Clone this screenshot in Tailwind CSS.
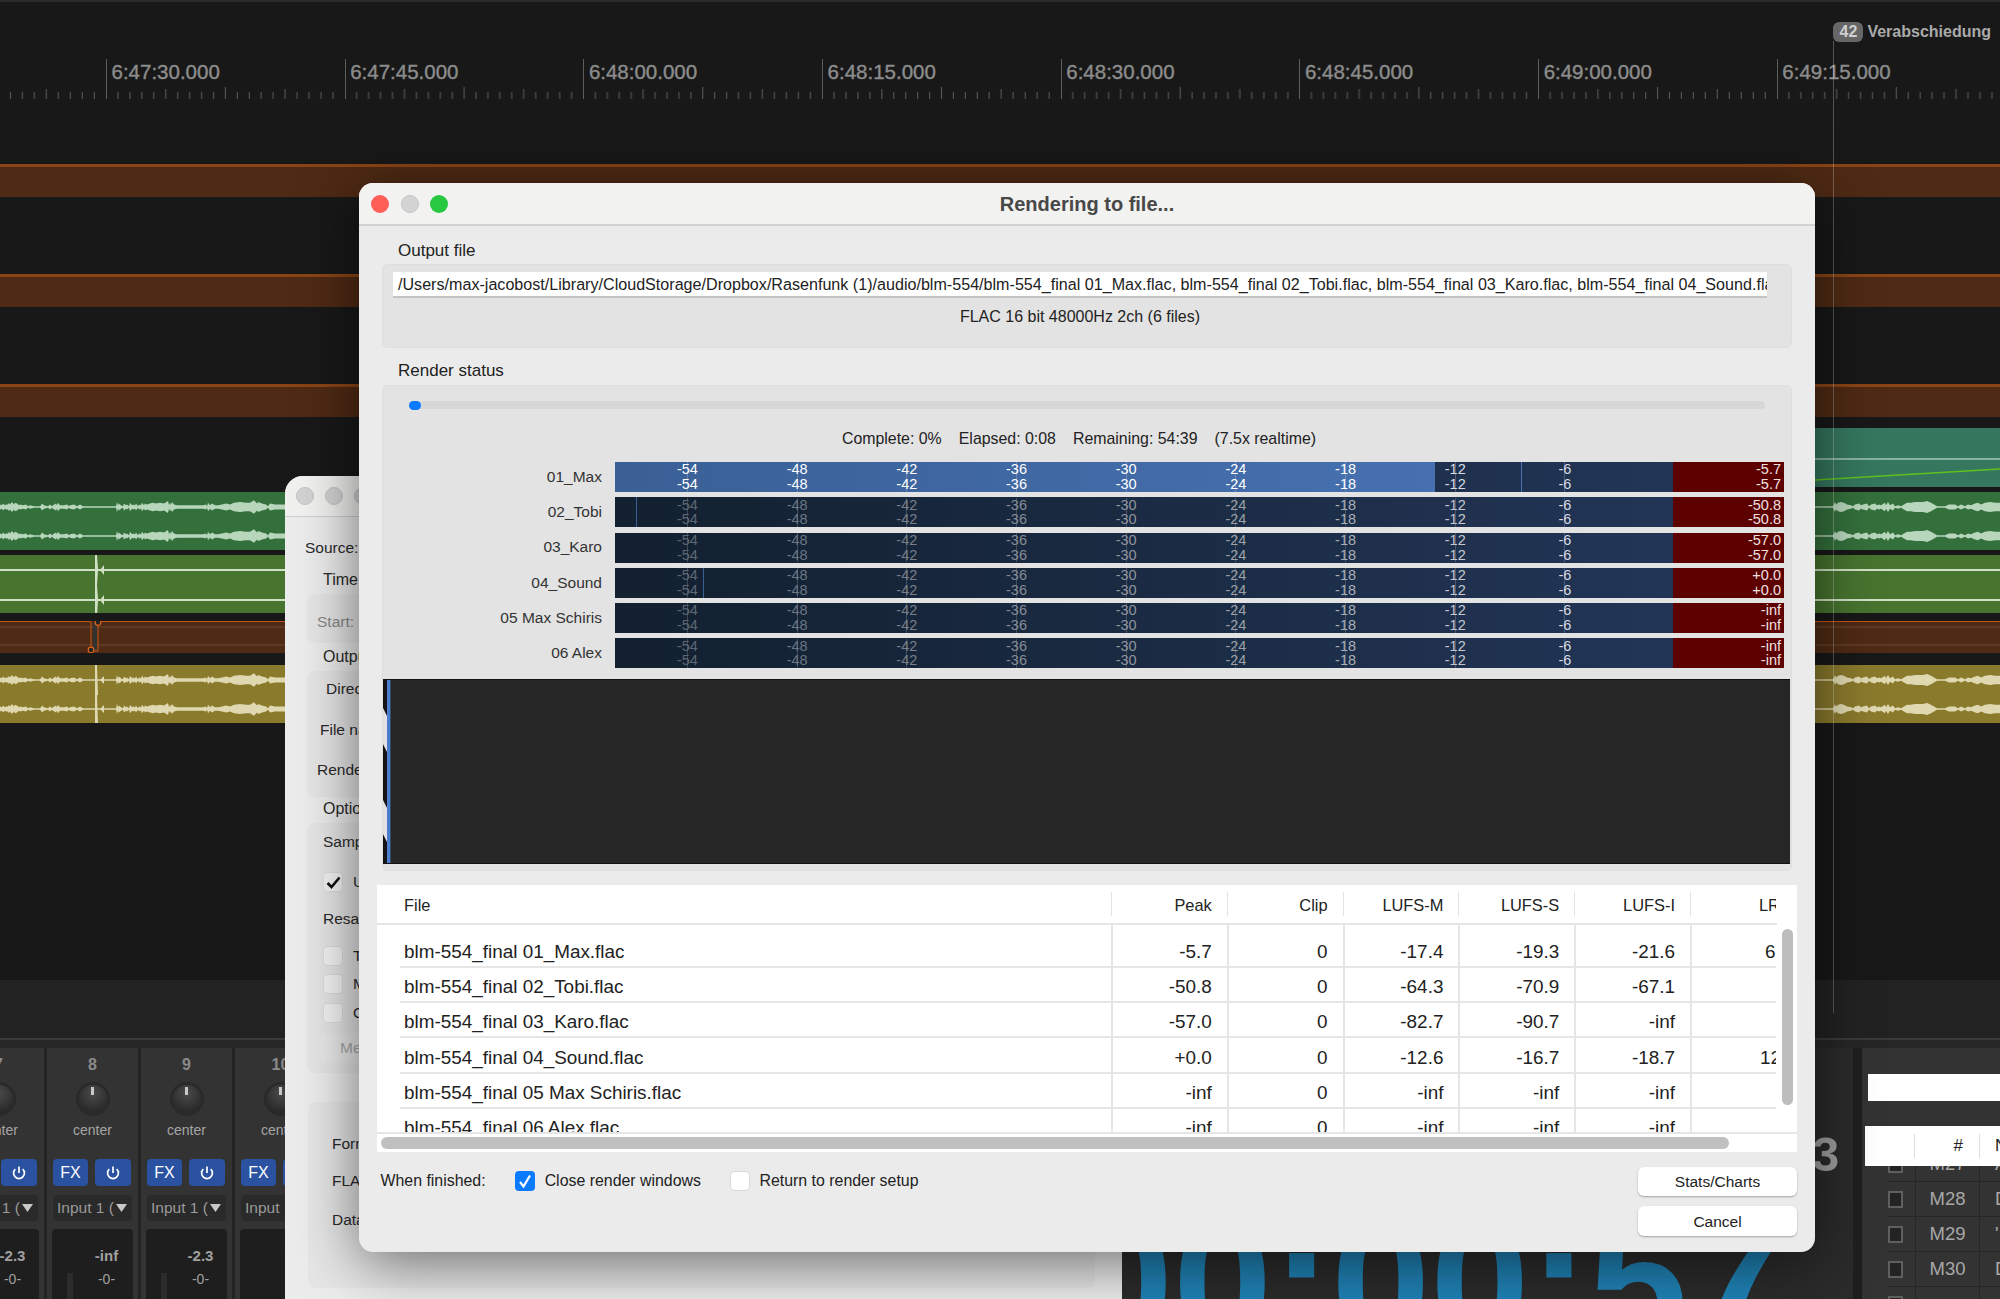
<!DOCTYPE html>
<html>
<head>
<meta charset="utf-8">
<script src="https://cdn.jsdelivr.net/npm/@tailwindcss/browser@4"></script>
</head>
<body class="m-0">
<div class="relative w-[2000px] h-[1299px] overflow-hidden bg-[#181818] font-['Liberation_Sans',sans-serif] flex flex-col">

<svg class="absolute w-0 h-0" aria-hidden="true">
  <defs>
    <path id="wah" d="M0 0V-3L2 -2L3 -4L5 -2L6 -3L8 -3L9 -5L10 -3L12 -6L14 -3L15 -5L17 -4L19 -2L20 -3L23 -2L26 -3L28 -1L30 -2L34 -1L40 -1L41 -2L42 -4L44 -2L48 -1L50 -3L52 -1L53 -2L56 -4L57 -2L58 -5L60 -2L64 -2L67 -3L69 -1L70 -2L74 -3L77 -1L80 -3L83 -1L116 -1L117 -6L118 -2L119 -4L121 -2L123 -1L124 -4L126 -2L127 -3L129 -1L130 -5L132 -2L133 -3L135 -2L136 -4L138 -1L139 -3L141 -2L142 -5L144 -2L145 -4L147 -3L150 -4L153 -5L156 -4L160 -5L164 -4L168 -7L169 -2L170 -5L171 -3L172 -6L174 -3L177 -2L203 -2L206 -3L207 -1L208 -5L210 -2L212 -4L215 -2L218 -2L222 -3L226 -4L230 -3L234 -5L240 -6L246 -5L250 -5L254 -8L257 -4L258 -6L262 -4L266 -3L268 -1L270 -4L275 -3L285 -3V0Z"/>
    <path id="wbh" d="M1815 0V-1L1833 -1L1835 -6L1836 -3L1838 -5L1841 -6L1844 -5L1847 -3L1851 -2L1853 -1L1855 -3L1859 -4L1861 -2L1863 -3L1867 -4L1869 -1L1871 -3L1875 -4L1877 -2L1879 -3L1881 -2L1885 -5L1886 -2L1888 -6L1890 -2L1893 -4L1895 -1L1898 -2L1901 -1L1907 -5L1911 -5L1915 -6L1923 -6L1927 -7L1931 -5L1934 -3L1937 -1L1945 -1L1949 -3L1955 -3L1958 -1L1961 -3L1965 -1L1968 -3L1971 -2L1975 -4L1978 -5L1981 -3L1985 -5L1990 -6L1995 -5L2000 -5V0Z"/>
    <g id="wave" transform="scale(1 .85)"><use href="#wah"/><use href="#wah" transform="scale(1 -1)"/><use href="#wbh"/><use href="#wbh" transform="scale(1 -1)"/></g>
    <path id="thin" d="M0 -1H2000V1H0ZM95 -15L97 -15L98 -1H95ZM95 15L97 15L98 1H95ZM100 0L104 -5V5Z"/>
    <path id="spike" d="M95 -15L97 -15L98 15L96 15L95 15ZM100 0L104 -4V4Z"/>
    <pattern id="ticks" patternUnits="userSpaceOnUse" x="106" y="0" width="238.7" height="12">
      <path stroke="#5c5c5c" stroke-width="1" d="M11.95 5V12M23.9 5V12M35.85 5V12M47.8 5V12M59.75 2V12M71.7 5V12M83.65 5V12M95.6 5V12M107.55 5V12M119.4 0V12M131.3 5V12M143.2 5V12M155.1 5V12M167 5V12M179 2V12M191 5V12M203 5V12M215 5V12M227 5V12"/>
    </pattern>
  </defs>
</svg>

<!-- Timeline -->
<div class="h-[980px] shrink-0 flex flex-col border-t-2 border-[#2a2a2a]">
  <div class="h-[20px]"></div>
  <div class="h-[20px] flex justify-end items-center pr-[9px] gap-[4px] font-bold">
    <span class="w-[30px] h-[20px] rounded-[6px] bg-[#666] text-[#cfcfcf] text-[16px] leading-[20px] text-center">42</span>
    <span class="text-[#aaaaaa] text-[16px]">Verabschiedung</span>
  </div>
  <div class="h-[17px]"></div>
  <div class="relative h-[40px] flex pl-[106px] text-[#8c8c8c] text-[20.5px] leading-[26px] [-webkit-text-stroke:0.4px_#8c8c8c]">
    <svg class="absolute left-0 bottom-0" width="2000" height="12"><rect width="2000" height="12" fill="url(#ticks)"/></svg>
    <div class="w-[238.7px] shrink-0 border-l border-[#5c5c5c] pl-[4.5px]">6:47:30.000</div>
    <div class="w-[238.7px] shrink-0 border-l border-[#5c5c5c] pl-[4.5px]">6:47:45.000</div>
    <div class="w-[238.7px] shrink-0 border-l border-[#5c5c5c] pl-[4.5px]">6:48:00.000</div>
    <div class="w-[238.7px] shrink-0 border-l border-[#5c5c5c] pl-[4.5px]">6:48:15.000</div>
    <div class="w-[238.7px] shrink-0 border-l border-[#5c5c5c] pl-[4.5px]">6:48:30.000</div>
    <div class="w-[238.7px] shrink-0 border-l border-[#5c5c5c] pl-[4.5px]">6:48:45.000</div>
    <div class="w-[238.7px] shrink-0 border-l border-[#5c5c5c] pl-[4.5px]">6:49:00.000</div>
    <div class="w-[238.7px] shrink-0 border-l border-[#5c5c5c] pl-[4.5px]">6:49:15.000</div>
  </div>
  <div class="mt-[65px] h-[33px] bg-[#4f2a14] border-t-[3px] border-[#8a4415]"></div>
  <div class="mt-[77px] h-[33px] bg-[#4f2a14] border-t-[3px] border-[#8a4415]"></div>
  <div class="mt-[77px] h-[33px] bg-[#4f2a14] border-t-[3px] border-[#8a4415]"></div>
  <div class="mt-[11px] ml-[500px] h-[59px] bg-[#35775f]">
    <svg width="1500" height="59"><path d="M0 31H1500" stroke="#a3c8b8" stroke-width="1.5"/><path d="M1315 52L1500 41" stroke="#5fc21e" stroke-width="1.5"/></svg>
  </div>
  <div class="mt-[5px] h-[58px] bg-[#34703c] text-[#b7d6bb]">
    <svg width="2000" height="58" fill="currentColor"><use href="#wave" y="15"/><use href="#wave" y="44"/></svg>
  </div>
  <div class="mt-[5px] h-[58px] bg-[#47742f] text-[#cfe0c4]">
    <svg width="2000" height="58" fill="currentColor"><use href="#thin" y="15"/><use href="#thin" y="45"/></svg>
  </div>
  <div class="mt-[8px] h-[32px] bg-[#4f2a14]">
    <svg width="2000" height="32" fill="none"><path d="M0 6H2000M0 24H2000" stroke="#6f4a33"/><rect x="93" y="1" width="4" height="29" fill="#333"/><path d="M0 .5H91V30H98V.5H2000" stroke="#c2561a" stroke-width="1"/><circle cx="91" cy="29" r="2.8" stroke="#e0641a" stroke-width="1.2" fill="#222"/><circle cx="98" cy="1.5" r="2.8" stroke="#e0641a" stroke-width="1.2" fill="#222"/></svg>
  </div>
  <div class="mt-[12px] h-[58px] bg-[#8a7a2c] text-[#e0d8b0]">
    <svg width="2000" height="58" fill="currentColor"><use href="#wave" y="15"/><use href="#wave" y="44"/><use href="#spike" y="15"/><use href="#spike" y="44"/></svg>
  </div>
</div>
<div class="h-[60px] shrink-0 bg-[#222222] border-b-2 border-[#3a3a3a]"></div>
<div class="h-[8px] shrink-0 bg-[#262626]"></div>

<!-- Lower row -->
<div class="flex-1 flex min-h-0 bg-[#232323]">
  <!-- mixer -->
  <div class="w-[1122px] shrink-0 overflow-hidden flex gap-[3px] text-center">
    <div class="-ml-[47px] w-[91px] shrink-0 bg-[#333] flex flex-col px-[6px] pt-[8px]">
      <div class="h-[18px] text-[16px] leading-[18px] font-bold text-[#8a8a8a]">7</div>
      <div class="mt-[3px] h-[44px] flex justify-center items-center"><div class="w-[28px] h-[28px] rounded-full bg-[radial-gradient(circle_at_50%_30%,#4a4a4a,#1f1f1f)] ring-[3px] ring-[#2a2a2a] flex justify-center"><div class="w-[3px] h-[8px] mt-[2px] bg-[#c8c8c8]"></div></div></div>
      <div class="-mt-[1px] h-[20px] text-[14px] leading-[20px] text-[#a5a5a5]">center</div>
      <div class="mt-[19px] flex gap-[7px]">
        <div class="w-[35px] h-[27px] rounded-[4px] bg-[#2a52a0] text-white text-[16px] leading-[27px]">FX</div>
        <div class="w-[36px] h-[27px] rounded-[4px] bg-[#2a52a0] flex items-center justify-center"><svg width="16" height="16" fill="none" stroke="#fff" stroke-width="1.7"><path d="M8 1.5V8M4.3 4.2a5.4 5.4 0 1 0 7.4 0"/></svg></div>
      </div>
      <div class="mt-[9px] h-[26px] rounded-[4px] bg-[#2a2a2a] flex items-center pl-[4px] pr-[5px] text-[15.5px] text-[#9a9a9a]"><span class="w-[57px] overflow-hidden whitespace-nowrap text-left">Input 1 (Hardware)</span><svg class="ml-auto" width="11" height="8"><path d="M0 0H11L5.5 8Z" fill="#c8c8c8"/></svg></div>
      <div class="-mx-[1px] mt-[8px] flex-1 rounded-t-[4px] bg-[#1e1e1e] relative text-[#a0a0a0] font-bold">
        <div class="pl-[28px] pt-[18px] text-[15px] leading-[18px]">-2.3</div>
        <div class="pl-[28px] pt-[5px] text-[14px] leading-[18px] font-normal">-0-</div>
        <div class="absolute left-[15px] top-[44px] bottom-0 w-[6px] bg-[#2c2c2c]"></div>
      </div>
    </div>
    <div class="w-[91px] shrink-0 bg-[#333] flex flex-col px-[6px] pt-[8px]">
      <div class="h-[18px] text-[16px] leading-[18px] font-bold text-[#8a8a8a]">8</div>
      <div class="mt-[3px] h-[44px] flex justify-center items-center"><div class="w-[28px] h-[28px] rounded-full bg-[radial-gradient(circle_at_50%_30%,#4a4a4a,#1f1f1f)] ring-[3px] ring-[#2a2a2a] flex justify-center"><div class="w-[3px] h-[8px] mt-[2px] bg-[#c8c8c8]"></div></div></div>
      <div class="-mt-[1px] h-[20px] text-[14px] leading-[20px] text-[#a5a5a5]">center</div>
      <div class="mt-[19px] flex gap-[7px]">
        <div class="w-[35px] h-[27px] rounded-[4px] bg-[#2a52a0] text-white text-[16px] leading-[27px]">FX</div>
        <div class="w-[36px] h-[27px] rounded-[4px] bg-[#2a52a0] flex items-center justify-center"><svg width="16" height="16" fill="none" stroke="#fff" stroke-width="1.7"><path d="M8 1.5V8M4.3 4.2a5.4 5.4 0 1 0 7.4 0"/></svg></div>
      </div>
      <div class="mt-[9px] h-[26px] rounded-[4px] bg-[#2a2a2a] flex items-center pl-[4px] pr-[5px] text-[15.5px] text-[#9a9a9a]"><span class="w-[57px] overflow-hidden whitespace-nowrap text-left">Input 1 (Hardware)</span><svg class="ml-auto" width="11" height="8"><path d="M0 0H11L5.5 8Z" fill="#c8c8c8"/></svg></div>
      <div class="-mx-[1px] mt-[8px] flex-1 rounded-t-[4px] bg-[#1e1e1e] relative text-[#a0a0a0] font-bold">
        <div class="pl-[28px] pt-[18px] text-[15px] leading-[18px]">-inf</div>
        <div class="pl-[28px] pt-[5px] text-[14px] leading-[18px] font-normal">-0-</div>
        <div class="absolute left-[15px] top-[44px] bottom-0 w-[6px] bg-[#2c2c2c]"></div>
      </div>
    </div>
    <div class="w-[91px] shrink-0 bg-[#333] flex flex-col px-[6px] pt-[8px]">
      <div class="h-[18px] text-[16px] leading-[18px] font-bold text-[#8a8a8a]">9</div>
      <div class="mt-[3px] h-[44px] flex justify-center items-center"><div class="w-[28px] h-[28px] rounded-full bg-[radial-gradient(circle_at_50%_30%,#4a4a4a,#1f1f1f)] ring-[3px] ring-[#2a2a2a] flex justify-center"><div class="w-[3px] h-[8px] mt-[2px] bg-[#c8c8c8]"></div></div></div>
      <div class="-mt-[1px] h-[20px] text-[14px] leading-[20px] text-[#a5a5a5]">center</div>
      <div class="mt-[19px] flex gap-[7px]">
        <div class="w-[35px] h-[27px] rounded-[4px] bg-[#2a52a0] text-white text-[16px] leading-[27px]">FX</div>
        <div class="w-[36px] h-[27px] rounded-[4px] bg-[#2a52a0] flex items-center justify-center"><svg width="16" height="16" fill="none" stroke="#fff" stroke-width="1.7"><path d="M8 1.5V8M4.3 4.2a5.4 5.4 0 1 0 7.4 0"/></svg></div>
      </div>
      <div class="mt-[9px] h-[26px] rounded-[4px] bg-[#2a2a2a] flex items-center pl-[4px] pr-[5px] text-[15.5px] text-[#9a9a9a]"><span class="w-[57px] overflow-hidden whitespace-nowrap text-left">Input 1 (Hardware)</span><svg class="ml-auto" width="11" height="8"><path d="M0 0H11L5.5 8Z" fill="#c8c8c8"/></svg></div>
      <div class="-mx-[1px] mt-[8px] flex-1 rounded-t-[4px] bg-[#1e1e1e] relative text-[#a0a0a0] font-bold">
        <div class="pl-[28px] pt-[18px] text-[15px] leading-[18px]">-2.3</div>
        <div class="pl-[28px] pt-[5px] text-[14px] leading-[18px] font-normal">-0-</div>
        <div class="absolute left-[15px] top-[44px] bottom-0 w-[6px] bg-[#2c2c2c]"></div>
      </div>
    </div>
    <div class="w-[91px] shrink-0 bg-[#333] flex flex-col px-[6px] pt-[8px]">
      <div class="h-[18px] text-[16px] leading-[18px] font-bold text-[#8a8a8a]">10</div>
      <div class="mt-[3px] h-[44px] flex justify-center items-center"><div class="w-[28px] h-[28px] rounded-full bg-[radial-gradient(circle_at_50%_30%,#4a4a4a,#1f1f1f)] ring-[3px] ring-[#2a2a2a] flex justify-center"><div class="w-[3px] h-[8px] mt-[2px] bg-[#c8c8c8]"></div></div></div>
      <div class="-mt-[1px] h-[20px] text-[14px] leading-[20px] text-[#a5a5a5]">center</div>
      <div class="mt-[19px] flex gap-[7px]">
        <div class="w-[35px] h-[27px] rounded-[4px] bg-[#2a52a0] text-white text-[16px] leading-[27px]">FX</div>
        <div class="w-[36px] h-[27px] rounded-[4px] bg-[#2a52a0]"></div>
      </div>
      <div class="mt-[9px] h-[26px] rounded-[4px] bg-[#2a2a2a] flex items-center pl-[4px] pr-[5px] text-[15.5px] text-[#9a9a9a]"><span class="w-[57px] overflow-hidden whitespace-nowrap text-left">Input 1 (Hardware)</span></div>
      <div class="-mx-[1px] mt-[8px] flex-1 rounded-t-[4px] bg-[#1e1e1e] text-[#a0a0a0] font-bold"></div>
    </div>
  </div>
  <!-- timecode panel -->
  <div class="relative w-[731px] shrink-0 bg-[#2b2b2b] overflow-hidden">
    <div class="absolute left-[-48px] top-[134px] text-[178px] leading-[200px] font-bold text-[#1f82b5] whitespace-nowrap">00:00:57</div>
    <div class="absolute left-[690px] top-[76px] text-[49px] leading-[60px] font-bold text-[#a0a0a0]">3</div>
  </div>
  <div class="w-[9px] shrink-0 bg-[#1f1f1f]"></div>
  <!-- markers panel -->
  <div class="flex-1 bg-[#333] overflow-hidden flex flex-col text-[18.5px] text-[#a8a8a8] whitespace-nowrap">
    <div class="mt-[26px] ml-[6px] h-[27px] shrink-0 bg-white"></div>
    <div class="relative mt-[25px] ml-[3px] h-[40px] shrink-0 bg-white flex text-[#222] text-[17px] leading-[40px]">
      <div class="w-[50px] shrink-0 border-r border-[#ddd] my-[8px]"></div>
      <div class="w-[65px] shrink-0 border-r border-[#ddd] my-[8px] leading-[24px] text-right pr-[16px]">#</div>
      <div class="pl-[15px] shrink-0">N</div>
    </div>
    <div class="-mt-[19px] ml-[26px]">
      <div class="h-[35px] flex items-center border-b border-[#262626]"><div class="w-[15px] h-[17px] shrink-0 border-2 border-[#5f5f5f] bg-[#232323]"></div><div class="ml-[12px] w-[65px] shrink-0 h-full border-x border-[#262626] flex items-center justify-center">M27</div><div class="pl-[15px] shrink-0">A</div></div>
      <div class="h-[35px] flex items-center border-b border-[#262626]"><div class="w-[15px] h-[17px] shrink-0 border-2 border-[#5f5f5f] bg-[#232323]"></div><div class="ml-[12px] w-[65px] shrink-0 h-full border-x border-[#262626] flex items-center justify-center">M28</div><div class="pl-[15px] shrink-0">D</div></div>
      <div class="h-[35px] flex items-center border-b border-[#262626]"><div class="w-[15px] h-[17px] shrink-0 border-2 border-[#5f5f5f] bg-[#232323]"></div><div class="ml-[12px] w-[65px] shrink-0 h-full border-x border-[#262626] flex items-center justify-center">M29</div><div class="pl-[15px] shrink-0">'</div></div>
      <div class="h-[35px] flex items-center border-b border-[#262626]"><div class="w-[15px] h-[17px] shrink-0 border-2 border-[#5f5f5f] bg-[#232323]"></div><div class="ml-[12px] w-[65px] shrink-0 h-full border-x border-[#262626] flex items-center justify-center">M30</div><div class="pl-[15px] shrink-0">D</div></div>
      <div class="h-[35px] flex items-center border-b border-[#262626]"><div class="w-[15px] h-[17px] shrink-0 border-2 border-[#5f5f5f] bg-[#232323]"></div><div class="ml-[12px] w-[65px] shrink-0 h-full border-x border-[#262626]"></div></div>
    </div>
  </div>
</div>

<!-- Playhead -->
<div class="absolute left-[1833px] top-[41px] h-[972px] w-px bg-white/25"></div>

<!-- Render setup window behind -->
<div class="absolute left-[285px] top-[476px] w-[837px] h-[823px] rounded-t-[18px] bg-[#ececec] flex flex-col text-[15.5px] leading-[20px] text-[#2a2a2a]">
  <div class="h-[41px] shrink-0 bg-[#f1f1ef] rounded-t-[18px] border-b border-[#cfcfcf] flex items-center pl-[11px] gap-[11px]">
    <div class="w-[18px] h-[18px] rounded-full bg-[#d3d3d3] border border-[#c4c4c4]"></div>
    <div class="w-[18px] h-[18px] rounded-full bg-[#d3d3d3] border border-[#c4c4c4]"></div>
    <div class="w-[18px] h-[18px] rounded-full bg-[#d3d3d3] border border-[#c4c4c4]"></div>
  </div>
  <div class="mt-[21px] pl-[20px]">Source:</div>
  <div class="mt-[12px] pl-[38px] text-[16px]">Time</div>
  <div class="mt-[4px] ml-[22px] mr-[40px] h-[49px] shrink-0 rounded-[8px] bg-[#e6e6e6] pl-[10px] pt-[18px] text-[#888]">Start:</div>
  <div class="mt-[4px] pl-[38px] text-[16px]">Output</div>
  <div class="mt-[4px] ml-[22px] mr-[40px] h-[126px] shrink-0 rounded-[8px] bg-[#e6e6e6] flex flex-col pt-[8px] gap-[20.5px]">
    <div class="pl-[19px]">Directory:</div>
    <div class="pl-[13px]">File name:</div>
    <div class="pl-[10px]">Render to:</div>
  </div>
  <div class="mt-[2px] pl-[38px] text-[16px]">Options</div>
  <div class="mt-[4px] ml-[22px] mr-[40px] h-[250px] shrink-0 rounded-[8px] bg-[#e6e6e6] flex flex-col pt-[9px] pl-[16px]">
    <div>Sample rate:</div>
    <div class="mt-[20px] flex items-center gap-[10px]"><div class="w-[20px] h-[20px] rounded-[4px] bg-[#f4f4f4] border border-[#ddd] flex items-center justify-center"><svg width="15" height="13" fill="none" stroke="#111" stroke-width="2.6"><path d="M1.5 7L5.5 11L13.5 1.5"/></svg></div>Use</div>
    <div class="mt-[17px]">Resample mode:</div>
    <div class="mt-[17px] h-[20px] flex items-center gap-[10px]"><div class="w-[20px] h-[20px] rounded-[4px] bg-[#f4f4f4] border border-[#ddd]"></div>Tracks</div>
    <div class="mt-[8px] h-[20px] flex items-center gap-[10px]"><div class="w-[20px] h-[20px] rounded-[4px] bg-[#f4f4f4] border border-[#ddd]"></div>Multi</div>
    <div class="mt-[9px] h-[20px] flex items-center gap-[10px]"><div class="w-[20px] h-[20px] rounded-[4px] bg-[#f4f4f4] border border-[#ddd]"></div>Only</div>
    <div class="mt-[10px] -ml-[3px] w-[200px] h-[30px] rounded-[6px] bg-[#eaeaea] pl-[20px] leading-[30px] text-[#a8a8a8]">Metadata</div>
  </div>
  <div class="mt-[29px] ml-[23px] w-[787px] h-[186px] shrink-0 rounded-[8px] bg-[#e6e6e6] flex flex-col pl-[24px] pt-[32px]">
    <div>Format:</div>
    <div class="mt-[17px]">FLAC</div>
    <div class="mt-[19px]">Data:</div>
  </div>
</div>

<!-- Render dialog -->
<div class="absolute left-[359px] top-[183px] w-[1456px] h-[1069px] rounded-[14px] bg-[#ebebeb] flex flex-col shadow-[0_10px_60px_rgba(0,0,0,0.55)] text-[#222] leading-[20px]">
  <div class="h-[43px] shrink-0 rounded-t-[14px] bg-[#f2f2f0] border-b-2 border-[#d2d2d2] grid grid-cols-[1fr_auto_1fr] items-center">
    <div class="flex gap-[11.5px] pl-[12px]">
      <div class="w-[18px] h-[18px] rounded-full bg-[#ff5f57]"></div>
      <div class="w-[18px] h-[18px] rounded-full bg-[#d3d3d3] border border-[#c6c6c6]"></div>
      <div class="w-[18px] h-[18px] rounded-full bg-[#28c840]"></div>
    </div>
    <div class="text-[20px] font-bold text-[#484848]">Rendering to file...</div>
    <div></div>
  </div>

  <div class="mt-[15px] pl-[39px] text-[17px]">Output file</div>
  <div class="mt-[3px] mx-[23px] h-[84px] shrink-0 rounded-[6px] bg-[#e3e3e3] border border-[#dedede] pt-[7px] pl-[10px]">
    <div class="w-[1374px] h-[26px] bg-white border-b-2 border-[#c4c4c4] pl-[5px] text-[16.12px] leading-[24px] overflow-hidden whitespace-nowrap">/Users/max-jacobost/Library/CloudStorage/Dropbox/Rasenfunk (1)/audio/blm-554/blm-554_final 01_Max.flac, blm-554_final 02_Tobi.flac, blm-554_final 03_Karo.flac, blm-554_final 04_Sound.flac, blm-554_final 05 Max Schiris.flac</div>
    <div class="w-[1374px] mt-[9px] text-center text-[16px]">FLAC 16 bit 48000Hz 2ch (6 files)</div>
  </div>

  <div class="mt-[13px] pl-[39px] text-[17px]">Render status</div>
  <div class="mt-[4px] mx-[23px] h-[486px] shrink-0 rounded-[6px] bg-[#e3e3e3] border border-[#dedede] pt-[15px] flex flex-col">
    <div class="ml-[26px] w-[1356px] h-[8px] shrink-0 rounded-full bg-[#d7d7d7]"><div class="w-[12px] h-[9px] rounded-full bg-[#0a7aff]"></div></div>
    <div class="mt-[20px] h-[20px] shrink-0 flex justify-center gap-[17px] pr-[16px] text-[15.9px]">
      <span>Complete: 0%</span><span>Elapsed: 0:08</span><span>Remaining: 54:39</span><span>(7.5x realtime)</span>
    </div>
    <div class="mt-[13px] flex flex-col gap-[5.3px] text-[14.5px] leading-[14.7px]">
      <!-- row 1 -->
      <div class="h-[30px] flex items-center">
        <div class="w-[219px] text-right text-[15.5px] text-[#333]">01_Max</div>
        <div class="ml-[12.6px] w-[1169.4px] h-full flex items-stretch">
          <div class="relative w-[1058.4px] bg-[linear-gradient(90deg,#12202f,#223556)]">
            <div class="absolute left-0 inset-y-0 w-[820.4px] bg-[linear-gradient(90deg,#3a6096,#4670b0)]"></div>
            <div class="absolute left-[906.4px] inset-y-0 w-px bg-[#4670b0]"></div>
            <div class="relative h-full flex items-center pl-[18px] text-white *:w-[109.7px] *:text-center *:bg-[linear-gradient(#ffffff38,#ffffff38)] *:bg-[length:1px_100%] *:bg-center *:bg-no-repeat">
              <div>-54<br>-54</div><div>-48<br>-48</div><div>-42<br>-42</div><div>-36<br>-36</div><div>-30<br>-30</div><div>-24<br>-24</div><div>-18<br>-18</div><div class="text-[#d8dde4]">-12<br>-12</div><div class="text-[#d8dde4]">-6<br>-6</div>
            </div>
          </div>
          <div class="w-[111px] bg-[#5c0000] flex items-center justify-end pr-[3px] text-[#f0e0e0] text-right">-5.7<br>-5.7</div>
        </div>
      </div>
      <!-- row 2 -->
      <div class="h-[30px] flex items-center">
        <div class="w-[219px] text-right text-[15.5px] text-[#333]">02_Tobi</div>
        <div class="ml-[12.6px] w-[1169.4px] h-full flex items-stretch">
          <div class="relative w-[1058.4px] bg-[linear-gradient(90deg,#12202f,#223556)]">
            <div class="absolute left-[21.9px] inset-y-0 w-px bg-[#3a6096]"></div>
            <div class="relative h-full flex items-center pl-[18px] *:w-[109.7px] *:text-center *:bg-[linear-gradient(#ffffff30,#ffffff30)] *:bg-[length:1px_100%] *:bg-center *:bg-no-repeat">
              <div class="text-[#5e6875]">-54<br>-54</div><div class="text-[#6c7582]">-48<br>-48</div><div class="text-[#787f8a]">-42<br>-42</div><div class="text-[#858c96]">-36<br>-36</div><div class="text-[#8f959e]">-30<br>-30</div><div class="text-[#9aa0a8]">-24<br>-24</div><div class="text-[#a8aeb6]">-18<br>-18</div><div class="text-[#c4c9d0]">-12<br>-12</div><div class="text-[#d8dde4]">-6<br>-6</div>
            </div>
          </div>
          <div class="w-[111px] bg-[#5c0000] flex items-center justify-end pr-[3px] text-[#f0e0e0] text-right">-50.8<br>-50.8</div>
        </div>
      </div>
      <!-- row 3 -->
      <div class="h-[30px] flex items-center">
        <div class="w-[219px] text-right text-[15.5px] text-[#333]">03_Karo</div>
        <div class="ml-[12.6px] w-[1169.4px] h-full flex items-stretch">
          <div class="relative w-[1058.4px] bg-[linear-gradient(90deg,#12202f,#223556)]">
            <div class="relative h-full flex items-center pl-[18px] *:w-[109.7px] *:text-center *:bg-[linear-gradient(#ffffff30,#ffffff30)] *:bg-[length:1px_100%] *:bg-center *:bg-no-repeat">
              <div class="text-[#5e6875]">-54<br>-54</div><div class="text-[#6c7582]">-48<br>-48</div><div class="text-[#787f8a]">-42<br>-42</div><div class="text-[#858c96]">-36<br>-36</div><div class="text-[#8f959e]">-30<br>-30</div><div class="text-[#9aa0a8]">-24<br>-24</div><div class="text-[#a8aeb6]">-18<br>-18</div><div class="text-[#c4c9d0]">-12<br>-12</div><div class="text-[#d8dde4]">-6<br>-6</div>
            </div>
          </div>
          <div class="w-[111px] bg-[#5c0000] flex items-center justify-end pr-[3px] text-[#f0e0e0] text-right">-57.0<br>-57.0</div>
        </div>
      </div>
      <!-- row 4 -->
      <div class="h-[30px] flex items-center">
        <div class="w-[219px] text-right text-[15.5px] text-[#333]">04_Sound</div>
        <div class="ml-[12.6px] w-[1169.4px] h-full flex items-stretch">
          <div class="relative w-[1058.4px] bg-[linear-gradient(90deg,#12202f,#223556)]">
            <div class="absolute left-[88px] inset-y-0 w-px bg-[#3a6096]"></div>
            <div class="relative h-full flex items-center pl-[18px] *:w-[109.7px] *:text-center *:bg-[linear-gradient(#ffffff30,#ffffff30)] *:bg-[length:1px_100%] *:bg-center *:bg-no-repeat">
              <div class="text-[#5e6875]">-54<br>-54</div><div class="text-[#6c7582]">-48<br>-48</div><div class="text-[#787f8a]">-42<br>-42</div><div class="text-[#858c96]">-36<br>-36</div><div class="text-[#8f959e]">-30<br>-30</div><div class="text-[#9aa0a8]">-24<br>-24</div><div class="text-[#a8aeb6]">-18<br>-18</div><div class="text-[#c4c9d0]">-12<br>-12</div><div class="text-[#d8dde4]">-6<br>-6</div>
            </div>
          </div>
          <div class="w-[111px] bg-[#5c0000] flex items-center justify-end pr-[3px] text-[#f0e0e0] text-right">+0.0<br>+0.0</div>
        </div>
      </div>
      <!-- row 5 -->
      <div class="h-[30px] flex items-center">
        <div class="w-[219px] text-right text-[15.5px] text-[#333]">05 Max Schiris</div>
        <div class="ml-[12.6px] w-[1169.4px] h-full flex items-stretch">
          <div class="relative w-[1058.4px] bg-[linear-gradient(90deg,#12202f,#223556)]">
            <div class="relative h-full flex items-center pl-[18px] *:w-[109.7px] *:text-center *:bg-[linear-gradient(#ffffff30,#ffffff30)] *:bg-[length:1px_100%] *:bg-center *:bg-no-repeat">
              <div class="text-[#5e6875]">-54<br>-54</div><div class="text-[#6c7582]">-48<br>-48</div><div class="text-[#787f8a]">-42<br>-42</div><div class="text-[#858c96]">-36<br>-36</div><div class="text-[#8f959e]">-30<br>-30</div><div class="text-[#9aa0a8]">-24<br>-24</div><div class="text-[#a8aeb6]">-18<br>-18</div><div class="text-[#c4c9d0]">-12<br>-12</div><div class="text-[#d8dde4]">-6<br>-6</div>
            </div>
          </div>
          <div class="w-[111px] bg-[#5c0000] flex items-center justify-end pr-[3px] text-[#f0e0e0] text-right">-inf<br>-inf</div>
        </div>
      </div>
      <!-- row 6 -->
      <div class="h-[30px] flex items-center">
        <div class="w-[219px] text-right text-[15.5px] text-[#333]">06 Alex</div>
        <div class="ml-[12.6px] w-[1169.4px] h-full flex items-stretch">
          <div class="relative w-[1058.4px] bg-[linear-gradient(90deg,#12202f,#223556)]">
            <div class="relative h-full flex items-center pl-[18px] *:w-[109.7px] *:text-center *:bg-[linear-gradient(#ffffff30,#ffffff30)] *:bg-[length:1px_100%] *:bg-center *:bg-no-repeat">
              <div class="text-[#5e6875]">-54<br>-54</div><div class="text-[#6c7582]">-48<br>-48</div><div class="text-[#787f8a]">-42<br>-42</div><div class="text-[#858c96]">-36<br>-36</div><div class="text-[#8f959e]">-30<br>-30</div><div class="text-[#9aa0a8]">-24<br>-24</div><div class="text-[#a8aeb6]">-18<br>-18</div><div class="text-[#c4c9d0]">-12<br>-12</div><div class="text-[#d8dde4]">-6<br>-6</div>
            </div>
          </div>
          <div class="w-[111px] bg-[#5c0000] flex items-center justify-end pr-[3px] text-[#f0e0e0] text-right">-inf<br>-inf</div>
        </div>
      </div>
    </div>
    <!-- waveform -->
    <div class="mt-[11px] h-[185px] w-[1407px] shrink-0 bg-[#262626] border-y border-[#111]">
      <svg width="8" height="183" class="block"><path d="M0 0H4V36L0 28ZM0 64L4 72V128L0 120ZM0 154L4 162V183H0Z" fill="#151515"/><path d="M0 28L4 36V72L0 64ZM0 120L4 128V162L0 154Z" fill="#e3e3e3"/><rect x="4" width="3.4" height="183" fill="#4a7fd0"/></svg>
    </div>
  </div>

  <!-- table -->
  <div class="mt-[14px] ml-[18px] w-[1420px] h-[267px] shrink-0 bg-white flex flex-col text-[#222]">
    <div class="w-[1399.7px] h-[40px] shrink-0 border-b-2 border-[#e6e6e6] grid grid-cols-[734px_repeat(5,115.8px)_85.7px] text-[16.4px] items-center *:h-[24px] *:leading-[26px]">
      <div class="pl-[27px]">File</div>
      <div class="border-l border-[#e4e4e4] text-right pr-[15px]">Peak</div>
      <div class="border-l border-[#e4e4e4] text-right pr-[15px]">Clip</div>
      <div class="border-l border-[#e4e4e4] text-right pr-[15px]">LUFS-M</div>
      <div class="border-l border-[#e4e4e4] text-right pr-[15px]">LUFS-S</div>
      <div class="border-l border-[#e4e4e4] text-right pr-[15px]">LUFS-I</div>
      <div class="border-l border-[#e4e4e4] pl-[68px] overflow-hidden whitespace-nowrap">LRA</div>
    </div>
    <div class="h-[207px] shrink-0 flex">
      <div class="w-[1399.7px] h-[207px] overflow-hidden text-[18.9px] leading-[22px] grid grid-cols-[734px_repeat(5,115.8px)_85.7px] auto-rows-[35.3px] [grid-template-rows:42.7px] *:border-b-2 *:border-[#e6e6e6] *:flex *:items-end *:pb-[3px] *:justify-end *:pr-[15px]">
        <div class="ml-[23px] !justify-start pl-[4px]">blm-554_final 01_Max.flac</div><div class="border-l-2">-5.7</div><div class="border-l-2">0</div><div class="border-l-2">-17.4</div><div class="border-l-2">-19.3</div><div class="border-l-2">-21.6</div><div class="border-l-2 !justify-start !pr-0 pl-[73px] overflow-hidden">6</div>
        <div class="ml-[23px] !justify-start pl-[4px]">blm-554_final 02_Tobi.flac</div><div class="border-l-2">-50.8</div><div class="border-l-2">0</div><div class="border-l-2">-64.3</div><div class="border-l-2">-70.9</div><div class="border-l-2">-67.1</div><div class="border-l-2"></div>
        <div class="ml-[23px] !justify-start pl-[4px]">blm-554_final 03_Karo.flac</div><div class="border-l-2">-57.0</div><div class="border-l-2">0</div><div class="border-l-2">-82.7</div><div class="border-l-2">-90.7</div><div class="border-l-2">-inf</div><div class="border-l-2"></div>
        <div class="ml-[23px] !justify-start pl-[4px]">blm-554_final 04_Sound.flac</div><div class="border-l-2">+0.0</div><div class="border-l-2">0</div><div class="border-l-2">-12.6</div><div class="border-l-2">-16.7</div><div class="border-l-2">-18.7</div><div class="border-l-2 !justify-start !pr-0 pl-[68px] overflow-hidden">12</div>
        <div class="ml-[23px] !justify-start pl-[4px]">blm-554_final 05 Max Schiris.flac</div><div class="border-l-2">-inf</div><div class="border-l-2">0</div><div class="border-l-2">-inf</div><div class="border-l-2">-inf</div><div class="border-l-2">-inf</div><div class="border-l-2"></div>
        <div class="ml-[23px] !justify-start pl-[4px]">blm-554_final 06 Alex.flac</div><div class="border-l-2">-inf</div><div class="border-l-2">0</div><div class="border-l-2">-inf</div><div class="border-l-2">-inf</div><div class="border-l-2">-inf</div><div class="border-l-2"></div>
      </div>
      <div class="ml-[5.3px] pt-[4px]"><div class="w-[11px] h-[176px] rounded-full bg-[#bdbdbd]"></div></div>
    </div>
    <div class="h-[20px] shrink-0 border-t-2 border-[#e6e6e6] pt-[3px] pl-[4px]"><div class="w-[1348px] h-[12px] rounded-full bg-[#c0c0c0]"></div></div>
  </div>

  <!-- footer -->
  <div class="flex-1 flex justify-between text-[15.9px]">
    <div class="pl-[21.5px] pt-[19px] h-[39px] flex items-center">
      <span>When finished:</span>
      <div class="ml-[29px] w-[20px] h-[20px] rounded-[4px] bg-[#0a7aff] flex items-center justify-center"><svg width="14" height="14" fill="none" stroke="#fff" stroke-width="2.2"><path d="M2 8L5.5 12.5L12 1.5"/></svg></div>
      <span class="ml-[10px]">Close render windows</span>
      <div class="ml-[29.5px] w-[20px] h-[20px] rounded-[4px] bg-white border border-[#d8d8d8]"></div>
      <span class="ml-[9px]">Return to render setup</span>
    </div>
    <div class="mr-[18px] pt-[15px] flex flex-col gap-[10px] w-[159px] text-[15.5px]">
      <div class="h-[29px] rounded-[6px] bg-white shadow-[0_1px_2px_rgba(0,0,0,0.3)] text-center leading-[29px]">Stats/Charts</div>
      <div class="h-[30px] rounded-[6px] bg-white shadow-[0_1px_2px_rgba(0,0,0,0.3)] text-center leading-[31px]">Cancel</div>
    </div>
  </div>
</div>

</div>
</body>
</html>
